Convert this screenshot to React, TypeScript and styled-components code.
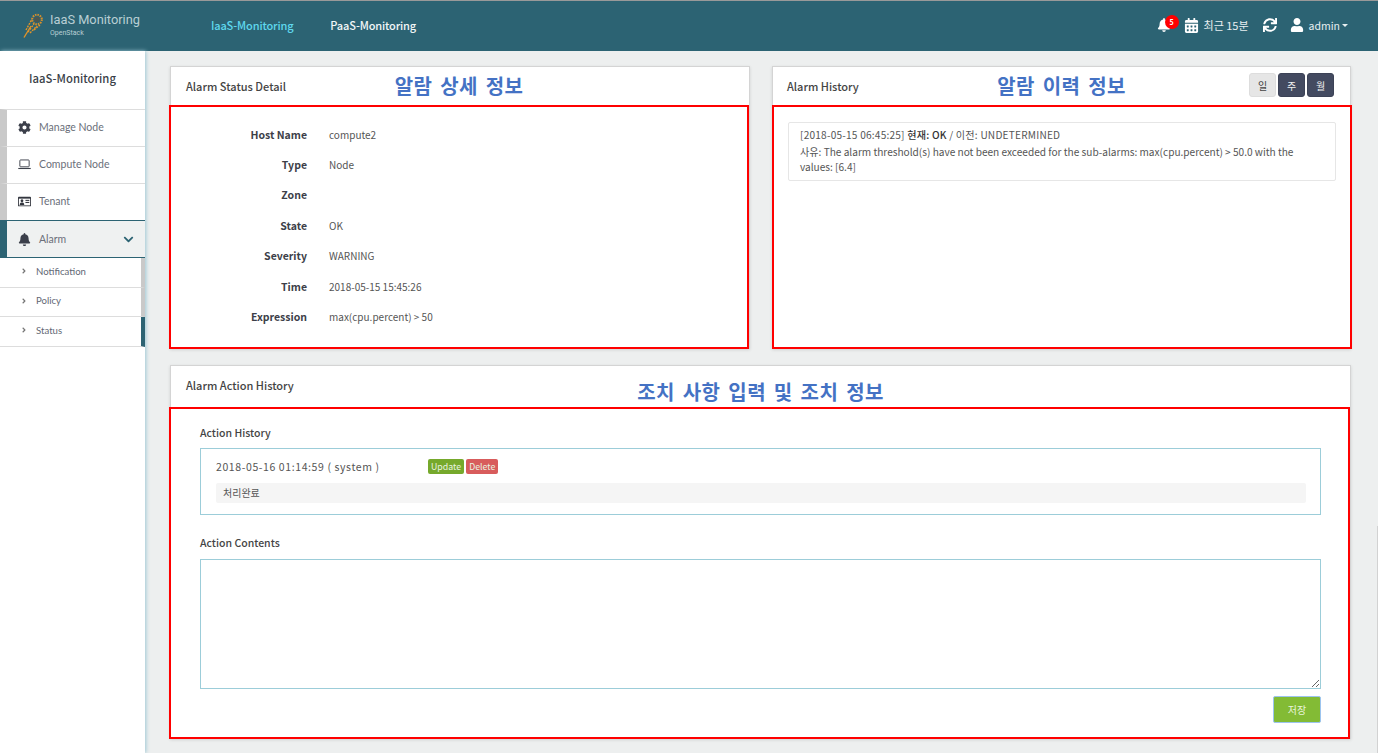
import React from 'react';
import styled, { createGlobalStyle } from 'styled-components';
import { FaCog, FaBell, FaChevronDown, FaCalendarAlt, FaSync, FaUser, FaAngleRight } from 'react-icons/fa';

const GlobalStyle = createGlobalStyle`
  html, body {
    margin: 0;
    padding: 0;
    height: 100%;
    overflow: hidden;
    background: #edefef;
  }
  * { box-sizing: border-box; }
  body {
    font-family: 'Noto Sans CJK KR', 'Noto Sans', sans-serif;
    color: #444;
  }
`;

const Page = styled.div`
  position: relative;
  width: 1378px;
  height: 753px;
  display: flex;
  flex-direction: column;
  overflow: hidden;

  &::after {
    content: '';
    position: absolute;
    right: 0;
    top: 526px;
    bottom: 0;
    width: 1px;
    background: #d2d2d2;
  }
`;

const TopBar = styled.header`
  height: 51px;
  flex: none;
  background: #2c6373;
  border-top: 1px solid #999;
  display: flex;
  align-items: center;
  padding: 0 30px 2px 23px;
`;

const Brand = styled.div`
  width: 188px;
  display: flex;
  align-items: center;
  gap: 7px;
`;

const BrandText = styled.div`
  display: flex;
  flex-direction: column;
  color: #b9cfd4;
  font-family: 'Roboto', sans-serif;
  font-size: 12.8px;
  line-height: 15px;
  margin-top: -1px;
  small {
    font-size: 7px;
    line-height: 9px;
    margin-top: 2px;
  }
`;

const TopLink = styled.a<{ $active?: boolean }>`
  margin-right: 37px;
  font-size: 11px;
  font-weight: 500;
  letter-spacing: -0.15px;
  color: ${p => (p.$active ? '#5fd8ee' : '#f2f6f7')};
`;

const TopRight = styled.div`
  margin-left: auto;
  display: flex;
  align-items: center;
  color: #e8eff1;
  font-size: 11px;
`;

const BellWrap = styled.span`
  position: relative;
  display: flex;
  font-size: 14px;
  color: #fff;
  margin-right: 13px;
`;

const BellBadge = styled.span`
  position: absolute;
  top: -3px;
  left: 8px;
  width: 14px;
  height: 14px;
  border-radius: 50%;
  background: #f00;
  color: #fff;
  font-size: 7px;
  font-weight: 700;
  line-height: 14px;
  text-align: center;
`;

const TopItem = styled.span<{ $gap: number; $right: number; $icon?: number }>`
  display: flex;
  align-items: center;
  gap: ${p => p.$gap}px;
  margin-right: ${p => p.$right}px;
  svg { color: #fff; font-size: ${p => p.$icon ?? 14}px; }
`;

const AdminName = styled.span`
  font-size: 10.5px;
`;

const Caret = styled.span`
  width: 0;
  height: 0;
  margin-left: -3px;
  border-left: 3px solid transparent;
  border-right: 3px solid transparent;
  border-top: 3px solid #e8eff1;
`;

const Body = styled.div`
  flex: 1;
  display: flex;
  min-height: 0;
`;

const Sidebar = styled.aside`
  width: 145px;
  flex: none;
  background: #fff;
  box-shadow: 1px 0 4px #9cc6d3;
  font-family: 'Lato', sans-serif;
  position: relative;
`;

const SideTitle = styled.div`
  height: 58px;
  padding-top: 19px;
  text-align: center;
  font-family: 'Noto Sans CJK KR', sans-serif;
  font-size: 11.3px;
  font-weight: 500;
  color: #3a3f48;
`;

const SideItem = styled.div<{ $active?: boolean }>`
  height: ${p => (p.$active ? 38 : 37)}px;
  display: flex;
  align-items: center;
  gap: 8px;
  padding-left: 11px;
  padding-bottom: ${p => (p.$active ? 0 : 2)}px;
  font-size: 10.5px;
  color: #6b6f7a;
  border-top: 1px solid ${p => (p.$active ? '#2c6373' : '#ddd')};
  border-left: 7px solid ${p => (p.$active ? '#2c6373' : '#c9c9c9')};
  background: ${p => (p.$active ? '#eff1f1' : '#fff')};
  ${p => p.$active && 'border-bottom: 1px solid #2c6373;'}
  svg { color: #3b3f4a; font-size: 13px; flex: none; width: 13px; }
`;

const ItemArrow = styled.span`
  margin-left: auto;
  margin-right: 10px;
  display: flex;
  svg { color: #2c6373; font-size: 11px; }
`;

const SubItem = styled.div<{ $active?: boolean }>`
  height: 29.6px;
  display: flex;
  align-items: center;
  padding: 0 0 2px 20px;
  gap: 8px;
  font-size: 9.6px;
  color: #636875;
  border-bottom: 1px solid #ddd;
  border-right: 4px solid ${p => (p.$active ? '#2c6373' : '#c9c9c9')};
  svg { font-size: 8px; color: #777; }
`;

const Main = styled.main`
  flex: 1;
  padding: 15px 27px 0 25px;
  display: flex;
  flex-direction: column;
  gap: 16px;
  min-width: 0;
`;

const TopPanels = styled.div`
  display: flex;
  justify-content: space-between;
`;

const Panel = styled.section<{ $width: number }>`
  width: ${p => p.$width}px;
  background: #fff;
  border: 1px solid #d4d4d4;
  border-bottom: 0;
  box-shadow: 0 1px 3px rgba(0, 0, 0, 0.12);
`;

const PanelHead = styled.div<{ $height: number }>`
  height: ${p => p.$height}px;
  display: grid;
  grid-template-columns: 1fr auto 1fr;
  align-items: center;
  padding: 0 16px;
`;

const PanelTitle = styled.h2<{ $lift?: number; $shift?: number }>`
  margin: ${p => -(p.$lift ?? 0)}px 0 0 ${p => -(p.$shift ?? 1)}px;
  font-size: 11px;
  font-weight: 500;
  color: #444;
`;

const Annotation = styled.div<{ $top?: number; $left?: number }>`
  font-size: 20px;
  font-weight: 700;
  line-height: 24px;
  letter-spacing: 0.4px;
  word-spacing: 3px;
  color: #4472c4;
  margin-top: ${p => p.$top ?? 0}px;
  margin-left: ${p => p.$left ?? 0}px;
`;

const RangeButtons = styled.div`
  justify-self: end;
  display: flex;
  gap: 2px;
  margin-top: -2px;
`;

const RangeButton = styled.button<{ $on?: boolean }>`
  width: 27px;
  height: 24px;
  padding: 0;
  border: 1px solid ${p => (p.$on ? '#ddd' : '#3c4256')};
  border-radius: 3px;
  background: ${p => (p.$on ? '#e6e6e6' : '#434a60')};
  color: ${p => (p.$on ? '#444' : '#f0f0f0')};
  font-family: inherit;
  font-size: 10px;
`;

const Marked = styled.div<{ $height: number; $shift: number; $width: number }>`
  height: ${p => p.$height}px;
  width: ${p => p.$width}px;
  margin-left: ${p => p.$shift}px;
  border: 2px solid #f00;
  background: #fff;
`;

const InfoGrid = styled.dl`
  margin: 0;
  padding: 12px 0 0;
  display: grid;
  grid-template-columns: 136px 1fr;
  grid-auto-rows: 30.4px;
  column-gap: 22px;
  align-items: center;
  font-size: 10px;
  dt { text-align: right; font-weight: 700; color: #3c4048; font-size: 10.5px; }
  dd { margin: 0; color: #555; }
`;

const HistoryCard = styled.div`
  margin: 15px 14px 0 14px;
  padding: 4px 11px 5px;
  height: 59px;
  border: 1px solid #e6e6e6;
  border-radius: 2px;
  font-size: 10.1px;
  line-height: 15px;
  color: #555;
  b { font-weight: 500; color: #333; }
`;

const HistoryHead = styled.div`
  margin-bottom: 2px;
  letter-spacing: 0.22px;
`;

const ActionBody = styled.div`
  padding: 16px 27px 0 29px;
`;

const FieldLabel = styled.div<{ $gap: number }>`
  font-size: 10.5px;
  font-weight: 500;
  line-height: 16px;
  color: #444;
  margin-bottom: ${p => p.$gap}px;
`;

const LogBox = styled.div`
  height: 67px;
  border: 1px solid #9ccdd9;
  padding: 9px 14px 0 15px;
  margin-bottom: 20px;
`;

const LogHead = styled.div`
  display: flex;
  align-items: center;
  font-size: 10.5px;
  color: #555;
  height: 17px;
  span:first-child { width: 212px; letter-spacing: 0.6px; }
`;

const Tag = styled.span<{ $tone: string }>`
  height: 15px;
  padding: 0 3px;
  margin-right: 2px;
  border-radius: 2px;
  background: ${p => p.$tone};
  color: #e9f3e0;
  font-size: 8.8px;
  line-height: 15px;
`;

const LogNote = styled.div`
  height: 20px;
  margin-top: 8px;
  padding: 0 7px;
  border-radius: 2px;
  background: #f5f5f5;
  font-size: 10px;
  line-height: 20px;
  color: #555;
`;

const ContentsArea = styled.textarea`
  display: block;
  width: 100%;
  height: 130px;
  border: 1px solid #9ccdd9;
  background: #fff;
  outline: none;
  margin-bottom: 7px;
`;

const SaveRow = styled.div`
  display: flex;
  justify-content: flex-end;
`;

const SaveButton = styled.button`
  width: 48px;
  height: 27px;
  padding: 0;
  border: 1px solid #9cc4ef;
  border-radius: 2px;
  background: #83bb35;
  color: #e9f5da;
  font-family: inherit;
  font-size: 10px;
`;

const Logo = () => (
  <svg width="20" height="25" viewBox="0 0 20 25" aria-hidden="true">
    <circle cx="14" cy="6.5" r="4.8" fill="none" stroke="#d8902a" strokeWidth="2" strokeDasharray="1.5 1" />
    <circle cx="14" cy="6.5" r="2.8" fill="#4c5650" />
    <g stroke="#e0942a" strokeWidth="1.4" fill="none">
      <path d="M1 24.5 L8 13" />
      <path d="M3 17 L9 6" strokeDasharray="2 1" />
      <path d="M5 19 L11 11" strokeDasharray="2 1" />
      <path d="M7 20 L14 13" strokeDasharray="2 1" />
      <path d="M11 17 L17 12" strokeDasharray="2 1" />
    </g>
  </svg>
);

const LaptopIcon = () => (
  <svg viewBox="0 0 14 11" height="11" aria-hidden="true">
    <rect x="2" y="0.6" width="10" height="7.4" rx="0.8" fill="none" stroke="#3b3f4a" strokeWidth="1" />
    <path d="M0.3 9.8 H13.7" stroke="#3b3f4a" strokeWidth="1.2" />
  </svg>
);

const CardIcon = () => (
  <svg viewBox="0 0 15 11" height="11" aria-hidden="true">
    <rect x="0" y="0" width="15" height="11" rx="1" fill="#33363f" />
    <rect x="1" y="2.2" width="13" height="7.8" fill="#fff" />
    <rect x="8.6" y="3.6" width="4.4" height="1.2" fill="#33363f" />
    <rect x="8.6" y="6" width="4.4" height="1.2" fill="#33363f" />
    <path d="M2 9.6 C2 7 3 6.6 4.6 6.6 C6.2 6.6 7.2 7 7.2 9.6 Z M4.6 3 A1.6 1.6 0 1 1 4.59 3 Z" fill="#33363f" />
  </svg>
);

const details: [string, string][] = [
  ['Host Name', 'compute2'],
  ['Type', 'Node'],
  ['Zone', ''],
  ['State', 'OK'],
  ['Severity', 'WARNING'],
  ['Time', '2018-05-15 15:45:26'],
  ['Expression', 'max(cpu.percent) > 50'],
];

const App: React.FC = () => {
  return (
    <Page>
      <GlobalStyle />
      <TopBar>
        <Brand>
          <Logo />
          <BrandText>
            IaaS Monitoring
            <small>OpenStack</small>
          </BrandText>
        </Brand>
        <TopLink $active>IaaS-Monitoring</TopLink>
        <TopLink>PaaS-Monitoring</TopLink>
        <TopRight>
          <BellWrap>
            <FaBell />
            <BellBadge>5</BellBadge>
          </BellWrap>
          <TopItem $gap={5} $right={14} $icon={15}>
            <FaCalendarAlt />
            최근 15분
          </TopItem>
          <TopItem $gap={0} $right={13}>
            <FaSync />
          </TopItem>
          <TopItem $gap={5} $right={0}>
            <FaUser />
            <AdminName>admin</AdminName>
            <Caret />
          </TopItem>
        </TopRight>
      </TopBar>
      <Body>
        <Sidebar>
          <SideTitle>IaaS-Monitoring</SideTitle>
          <SideItem><FaCog />Manage Node</SideItem>
          <SideItem><LaptopIcon />Compute Node</SideItem>
          <SideItem><CardIcon />Tenant</SideItem>
          <SideItem $active>
            <FaBell />Alarm
            <ItemArrow><FaChevronDown /></ItemArrow>
          </SideItem>
          <SubItem><FaAngleRight />Notification</SubItem>
          <SubItem><FaAngleRight />Policy</SubItem>
          <SubItem $active><FaAngleRight />Status</SubItem>
        </Sidebar>
        <Main>
          <TopPanels>
            <Panel $width={580}>
              <PanelHead $height={38}>
                <PanelTitle>Alarm Status Detail</PanelTitle>
                <Annotation $left={-2}>알람 상세 정보</Annotation>
              </PanelHead>
              <Marked $height={244} $shift={-2} $width={580}>
                <InfoGrid>
                  {details.map(([label, value]) => (
                    <React.Fragment key={label}>
                      <dt>{label}</dt>
                      <dd>{value}</dd>
                    </React.Fragment>
                  ))}
                </InfoGrid>
              </Marked>
            </Panel>
            <Panel $width={579}>
              <PanelHead $height={38}>
                <PanelTitle $shift={2}>Alarm History</PanelTitle>
                <Annotation>알람 이력 정보</Annotation>
                <RangeButtons>
                  <RangeButton $on>일</RangeButton>
                  <RangeButton>주</RangeButton>
                  <RangeButton>월</RangeButton>
                </RangeButtons>
              </PanelHead>
              <Marked $height={244} $shift={-1} $width={580}>
                <HistoryCard>
                  <HistoryHead>[2018-05-15 06:45:25] <b>현재: OK</b> / 이전: UNDETERMINED</HistoryHead>
                  사유: The alarm threshold(s) have not been exceeded for the sub-alarms: max(cpu.percent) &gt; 50.0 with the values: [6.4]
                </HistoryCard>
              </Marked>
            </Panel>
          </TopPanels>
          <Panel $width={1181}>
            <PanelHead $height={41}>
              <PanelTitle $lift={3}>Alarm Action History</PanelTitle>
              <Annotation $top={10}>조치 사항 입력 및 조치 정보</Annotation>
            </PanelHead>
            <Marked $height={332} $shift={-2} $width={1181}>
              <ActionBody>
                <FieldLabel $gap={7}>Action History</FieldLabel>
                <LogBox>
                  <LogHead>
                    <span>2018-05-16 01:14:59 ( system )</span>
                    <Tag $tone="#76a92c">Update</Tag>
                    <Tag $tone="#d85c5c">Delete</Tag>
                  </LogHead>
                  <LogNote>처리완료</LogNote>
                </LogBox>
                <FieldLabel $gap={8}>Action Contents</FieldLabel>
                <ContentsArea />
                <SaveRow>
                  <SaveButton>저장</SaveButton>
                </SaveRow>
              </ActionBody>
            </Marked>
          </Panel>
        </Main>
      </Body>
    </Page>
  );
};

export default App;
